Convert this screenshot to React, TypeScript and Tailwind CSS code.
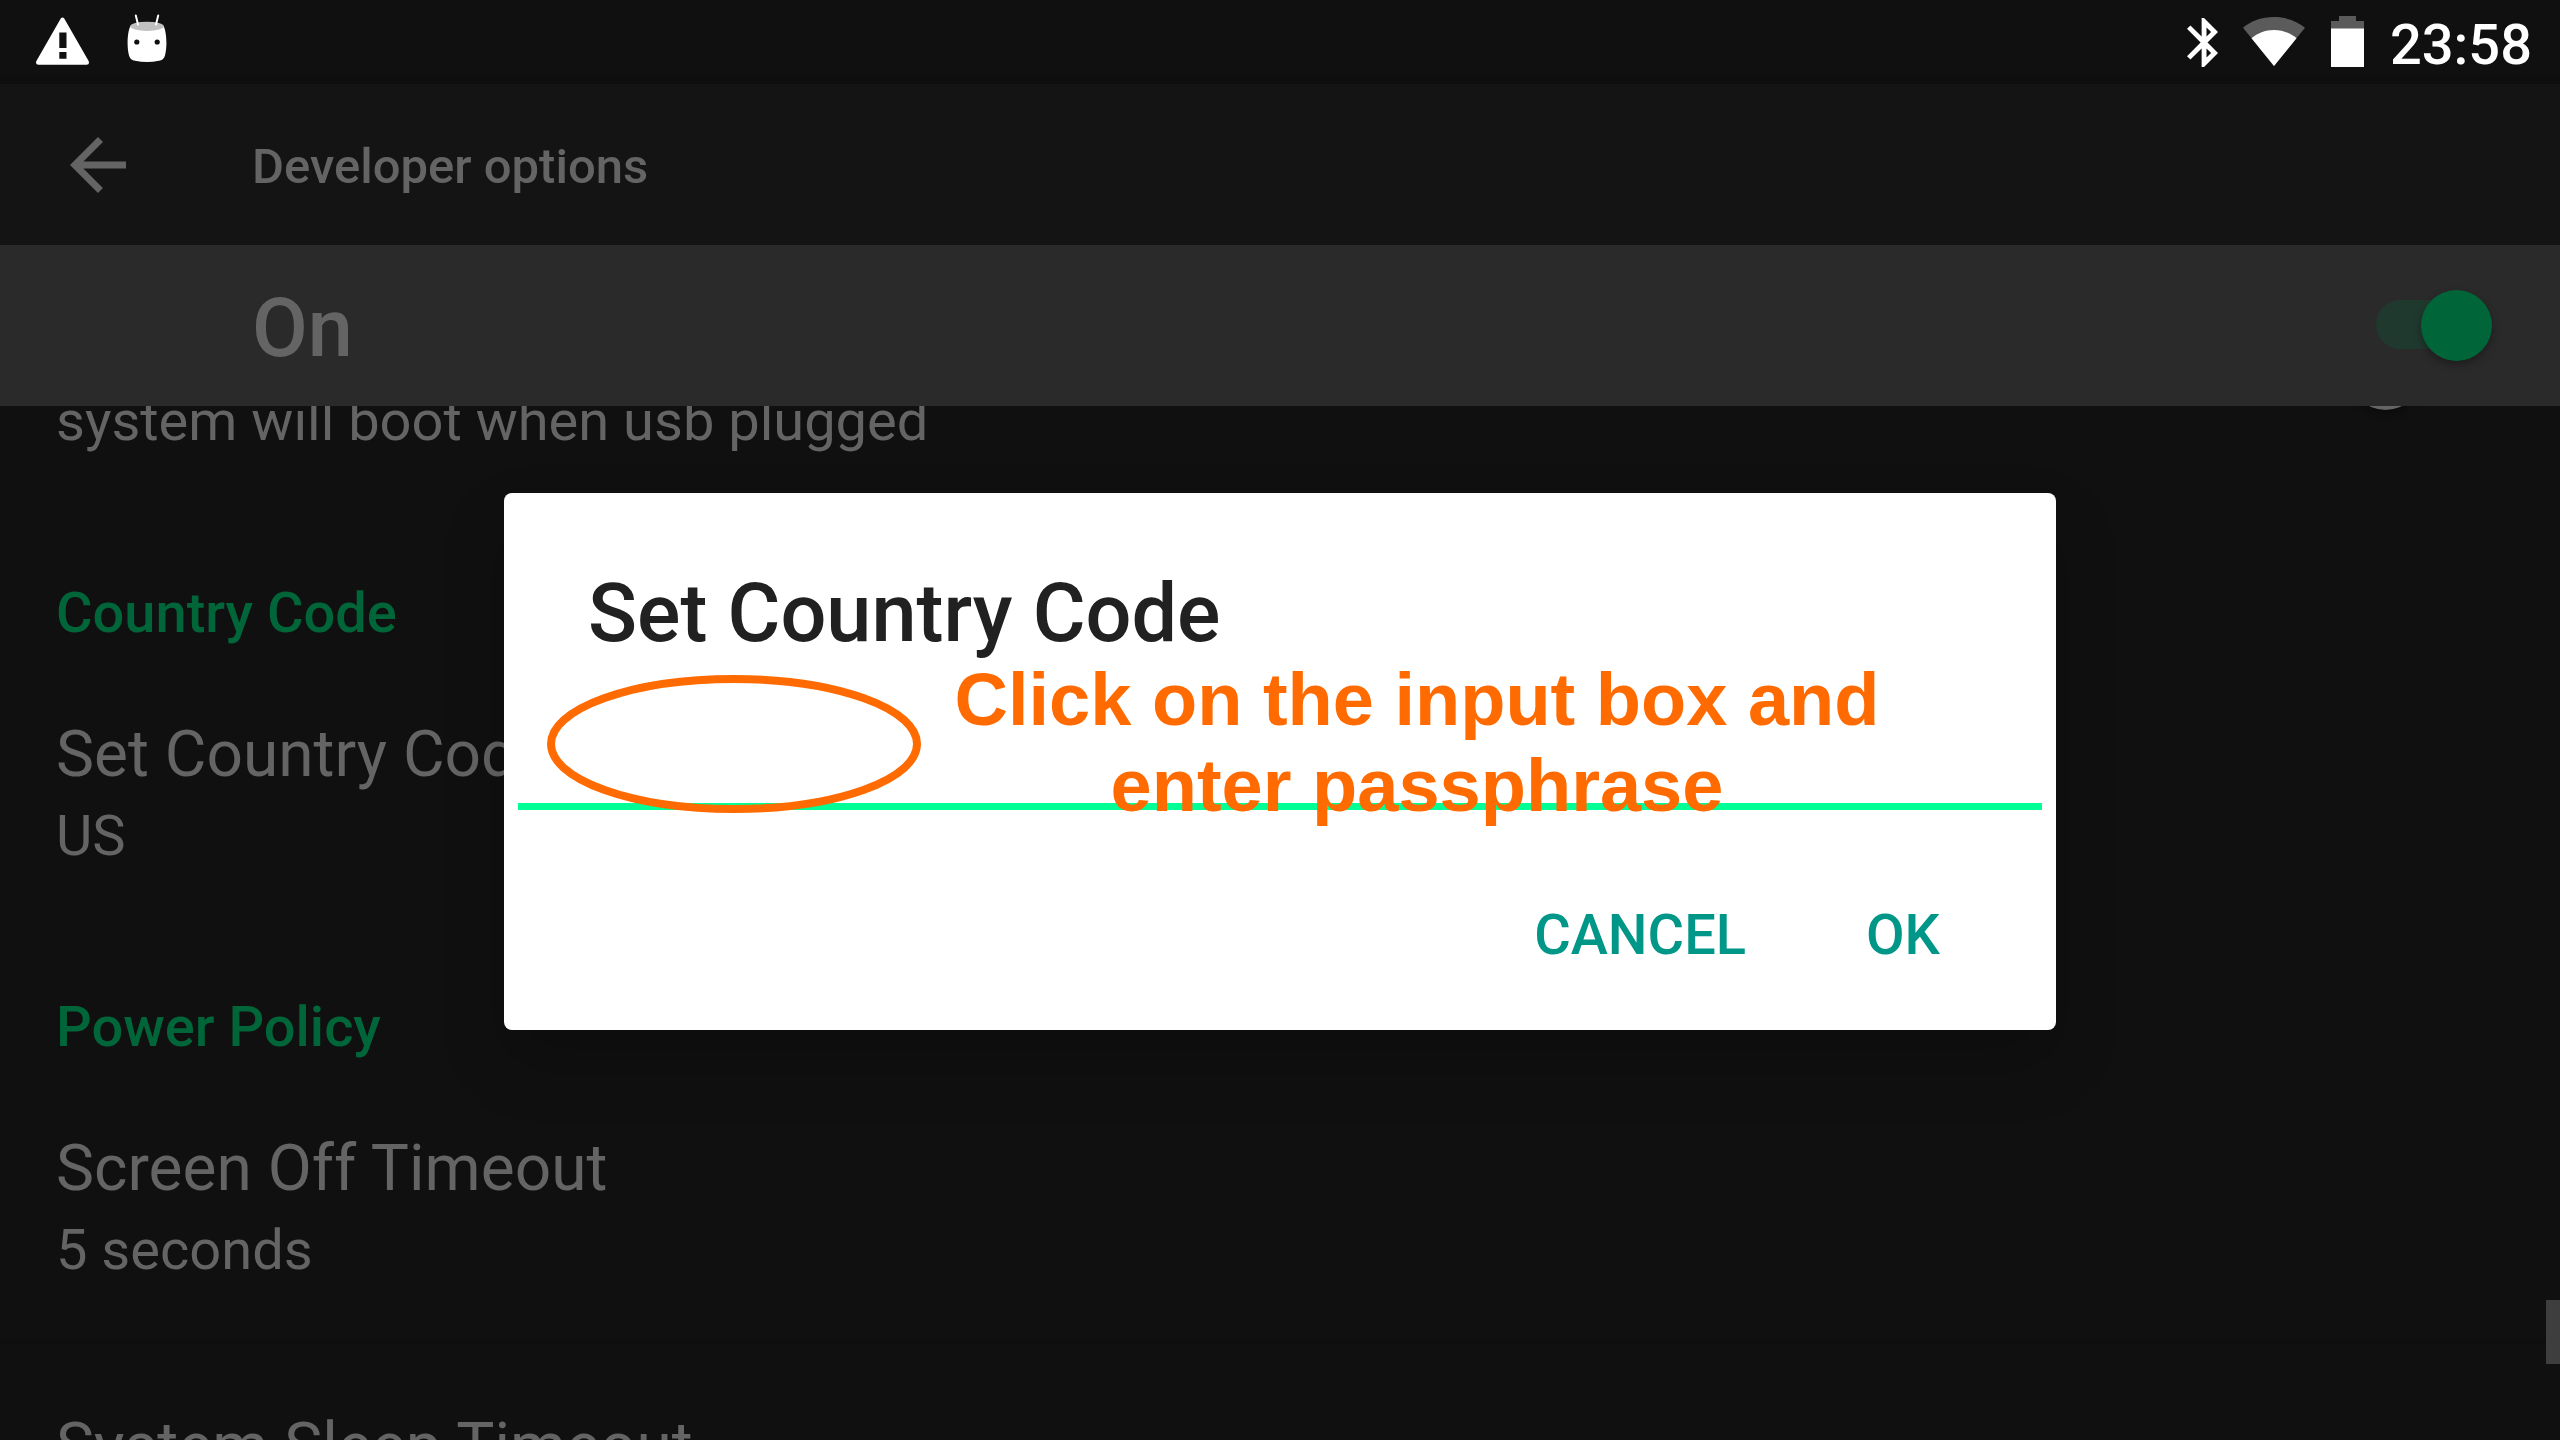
import React from "react";

function Toggle({ label, on }: { label: string; on: boolean }) {
  return (
    <input
      type="checkbox"
      role="switch"
      aria-label={label}
      defaultChecked={on}
      className="relative h-[71px] w-[116px] shrink-0 appearance-none before:absolute before:left-0 before:top-[10px] before:h-[49px] before:w-[112px] before:rounded-full before:bg-[#262626] after:absolute after:left-0 after:top-0 after:h-[71px] after:w-[71px] after:rounded-full after:bg-[#646464] after:shadow-[0_4px_8px_rgba(0,0,0,0.3)] checked:before:bg-[#20392e] checked:after:left-[45px] checked:after:bg-[#006639]"
    />
  );
}

function SectionHeading({ children }: { children: React.ReactNode }) {
  return (
    <h2 className="px-14 pt-[68px] pb-[6px] text-[56px] leading-[66px] font-medium text-[#006639]">
      {children}
    </h2>
  );
}

function Preference({ title, summary }: { title: string; summary: string }) {
  return (
    <div className="px-14 pt-[60px] pb-[52px]">
      <div className="text-[64px] leading-[86px]">{title}</div>
      <div className="text-[56px] leading-[76px]">{summary}</div>
    </div>
  );
}

function StatusBar() {
  return (
    <div className="flex h-[84px] shrink-0 items-start justify-between border-b-8 border-[#0e0e0e] pr-7 pl-9 text-white">
      <div className="flex items-start gap-[38px] pt-[14px]">
        <svg width="53" height="52" viewBox="0 0 53 52" aria-label="Warning">
          <path
            fill="currentColor"
            fillRule="evenodd"
            d="M24.6 4.8Q26.5 2.2 28.4 4.8L52.6 47Q54 50.7 50.5 50.8H2.5Q-1 50.7.4 47ZM23.3 18.5V34H30.5V18.5ZM23.3 38V44.8H30.5V38Z"
          />
        </svg>
        <svg width="40" height="50" viewBox="0 0 40 50" aria-label="Android">
          <path
            fill="currentColor"
            d="M3.5 12C8 17.5 32 17.5 36.500 12C39.500 17 40.500 32 38 41.500C37 45 35 46 32 46.800Q20 49.200 8 46.800C5 46 3 45 2 41.500C-.5 32 .5 17 3.500 12Z"
          />
          <ellipse cx="20" cy="12.300" rx="16.800" ry="4.600" fill="#c0c0c0" />
          <path d="M8.800 1.500L11 10.500M31.200 1.500L29 10.500" stroke="currentColor" strokeWidth="2" strokeLinecap="round" />
          <circle cx="9.800" cy="28" r="2.600" fill="#101010" />
          <circle cx="30.200" cy="28" r="2.600" fill="#101010" />
        </svg>
      </div>
      <div className="flex items-start">
        <svg width="31" height="49" viewBox="5 2 12.710 20" className="mt-[18px] mr-[25px]" aria-label="Bluetooth">
          <path
            fill="currentColor"
            d="M17.710 7.710L12 2h-1v7.590L6.410 5 5 6.410 10.590 12 5 17.590 6.410 19 11 14.410V22h1l5.710-5.710-4.300-4.290 4.300-4.290zM13 5.830l1.880 1.880L13 9.590V5.830zm1.880 10.460L13 18.170v-3.760l1.880 1.880z"
          />
        </svg>
        <svg width="62" height="49" viewBox="0 0 62 49" className="mt-[17px] mr-[26px]" aria-label="Wi-Fi">
          <path fill="#5b5b5b" d="M31 49L0 10.700C8 4 19 0 31 0S54 4 62 10.700Z" />
          <path fill="currentColor" d="M31 49L8.500 21.200C14.500 16.200 22 13 31 13S47.500 16.200 53.500 21.200Z" />
        </svg>
        <svg width="33" height="51" viewBox="0 0 33 51" className="mt-4 mr-[26px]" aria-label="Battery">
          <path fill="#5b5b5b" d="M8 0H25V5H33V13H0V5H8Z" />
          <path fill="currentColor" d="M0 12.500H33V51H0Z" />
        </svg>
        <span className="pt-3 text-[56px] leading-[66px] font-medium">23:58</span>
      </div>
    </div>
  );
}

function CountryCodeDialog() {
  return (
    <div
      role="dialog"
      aria-labelledby="dialog-title"
      className="relative w-full max-w-[1552px] rounded-lg bg-white pt-[74px] pb-8 shadow-[0_32px_64px_rgba(0,0,0,0.2)]"
    >
      <h2 id="dialog-title" className="px-[84px] text-[81px] leading-[94px] font-medium text-[#212121]">
        Set Country Code
      </h2>
      <div className="px-[14px]">
        <input
          type="text"
          aria-labelledby="dialog-title"
          className="block h-[149px] w-full border-b-[7px] border-[#00ff94] px-[70px] text-[64px] text-[#212121] outline-none"
        />
      </div>
      <div className="mt-[62px] flex justify-end gap-2 pr-[60px] text-[#009688]">
        <button type="button" className="h-[126px] px-14 text-[56px] font-medium">
          CANCEL
        </button>
        <button type="button" className="h-[126px] px-14 text-[56px] font-medium">
          OK
        </button>
      </div>

      <svg
        width="374"
        height="138"
        viewBox="0 0 374 138"
        className="pointer-events-none absolute top-[182px] left-[43px]"
        aria-hidden="true"
      >
        <ellipse cx="187" cy="69" rx="183" ry="65" fill="none" stroke="#ff6b00" strokeWidth="8" />
      </svg>
      <p className="pointer-events-none absolute top-[164px] left-[413px] w-[1000px] text-center font-['Liberation_Sans',sans-serif] text-[74px] leading-[86px] font-bold text-[#ff6b00]">
        Click on the input box and
        <br />
        enter passphrase
      </p>
    </div>
  );
}

export default function App() {
  return (
    <div className="relative flex h-screen flex-col overflow-hidden bg-[#101010] font-[Roboto,sans-serif] text-[#646464]">
      <StatusBar />

      <header className="flex h-[161px] shrink-0 items-center bg-[#141414] pl-14">
        <button type="button" aria-label="Back" className="mr-28">
          <svg width="84" height="84" viewBox="0 0 24 24" aria-hidden="true">
            <path fill="currentColor" d="M20 11H7.830l5.590-5.590L12 4l-8 8 8 8 1.410-1.410L7.830 13H20v-2z" />
          </svg>
        </button>
        <h1 className="pt-1 text-[49px] leading-[58px] font-medium">Developer options</h1>
      </header>

      <div className="flex h-[161px] shrink-0 items-center justify-between bg-[#2a2a2a] pr-[68px] pl-[252px]">
        <span className="pt-[6px] text-[81px] leading-[94px] font-medium">On</span>
        <Toggle label="Developer options" on />
      </div>

      <main className="min-h-0 flex-1 overflow-hidden">
        <div className="-mt-6">
          <div className="flex items-start justify-between pr-[94px] pb-[52px] pl-14">
            <div className="text-[56px] leading-[78px]">system will boot when usb plugged</div>
            <div className="-mt-[43px] flex h-[78px] items-start">
              <Toggle label="system will boot when usb plugged" on={false} />
            </div>
          </div>
          <SectionHeading>Country Code</SectionHeading>
          <Preference title="Set Country Code" summary="US" />
          <SectionHeading>Power Policy</SectionHeading>
          <Preference title="Screen Off Timeout" summary="5 seconds" />
          <hr className="border-t-4 border-[#0e0e0e]" />
          <Preference title="System Sleep Timeout" summary="Never" />
        </div>
      </main>

      <div className="absolute top-[1300px] right-0 h-16 w-[14px] bg-[#3e3e3e]" />

      <div className="absolute inset-0 flex items-center justify-center pt-[82px]">
        <CountryCodeDialog />
      </div>
    </div>
  );
}
